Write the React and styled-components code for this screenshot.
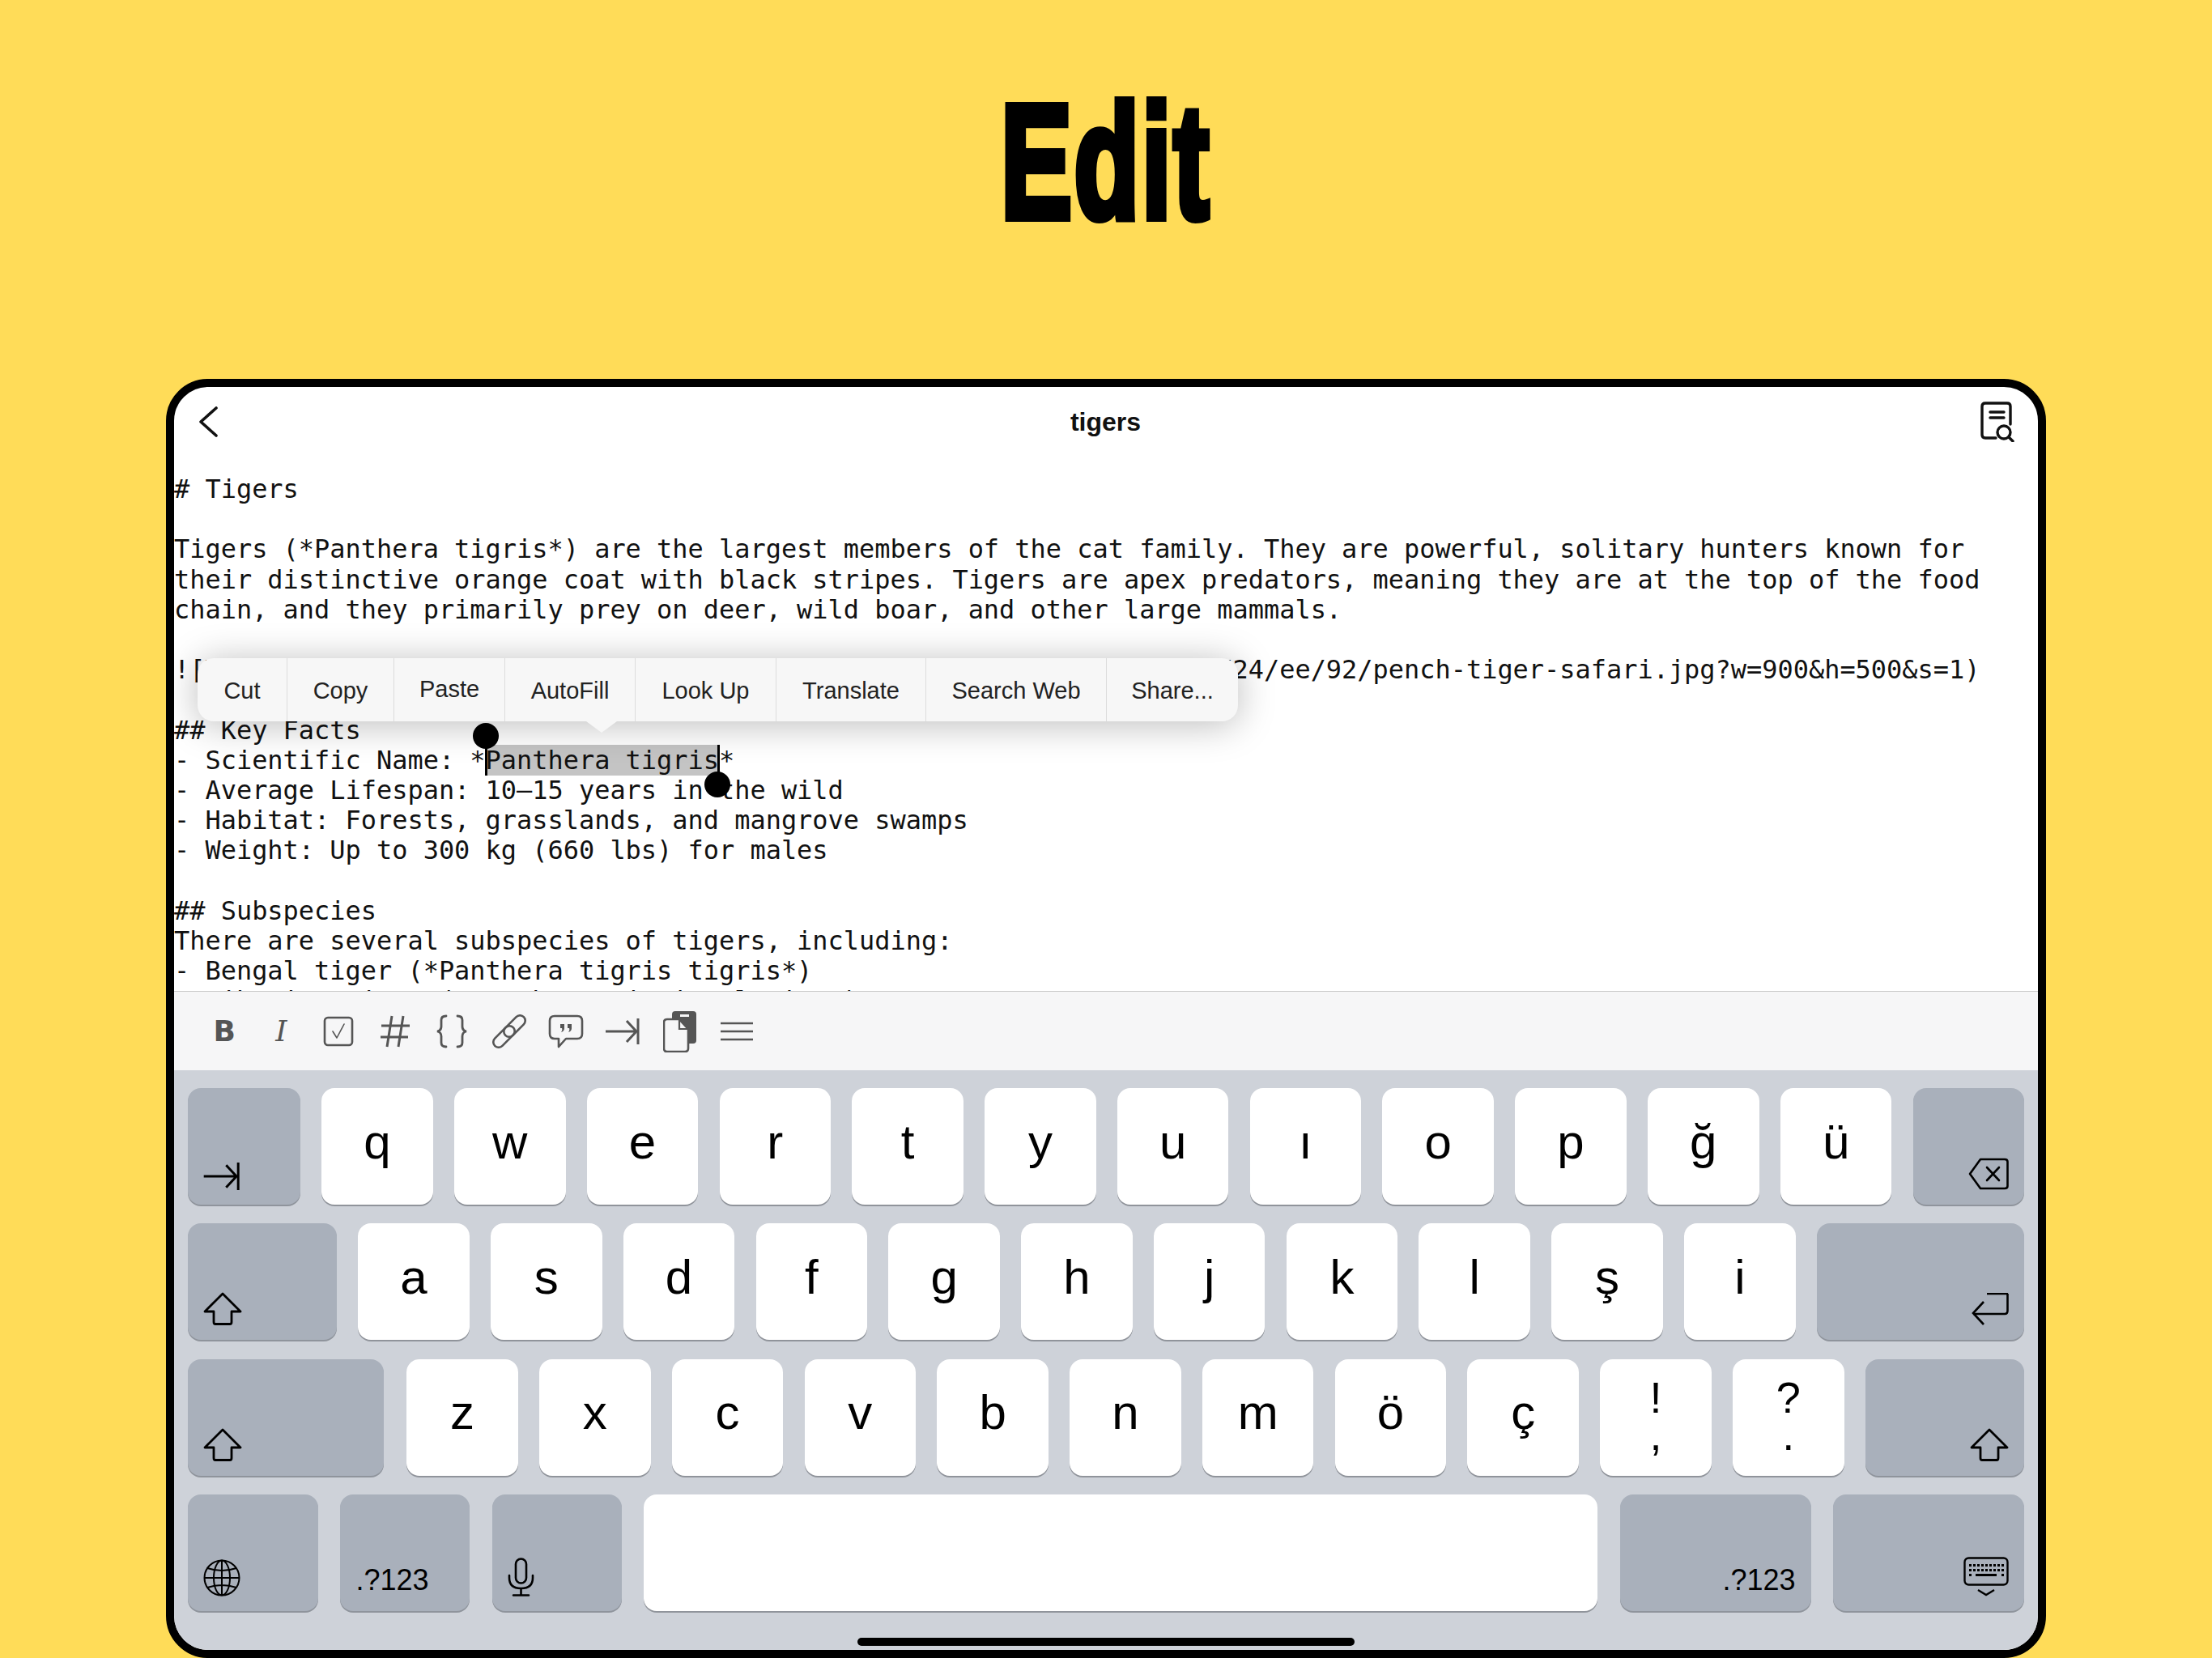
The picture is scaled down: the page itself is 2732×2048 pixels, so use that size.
import styled, { createGlobalStyle } from "styled-components";

const GlobalStyle = createGlobalStyle`
  html, body {
    margin: 0;
    padding: 0;
    background: #ffdc58;
  }
`;

const Page = styled.div`
  width: 2732px;
  height: 2048px;
  overflow: hidden;
  display: flex;
  flex-direction: column;
  align-items: center;
  background: #ffdc58;
`;

const Hero = styled.div`
  height: 468px;
  width: 100%;
  flex: none;
  display: flex;
  justify-content: center;
`;

const HeroTitle = styled.div`
  margin-top: 50px;
  height: 300px;
  line-height: 300px;
  font-family: "Liberation Sans", Arial, sans-serif;
  font-weight: 700;
  font-size: 200px;
  color: #000;
  -webkit-text-stroke: 10px #000;
  letter-spacing: 4px;
  transform: scaleX(0.66);
`;

const Device = styled.div`
  box-sizing: border-box;
  width: 2322px;
  height: 1580px;
  flex: none;
  border: 10px solid #000;
  border-radius: 52px;
  background: #fff;
  overflow: hidden;
  display: flex;
  flex-direction: column;
`;

const NavBar = styled.div`
  height: 86px;
  flex: none;
  display: grid;
  grid-template-columns: 1fr auto 1fr;
  align-items: center;
  padding: 0 29px 0 28px;
`;

const NavTitle = styled.div`
  font-family: "Liberation Sans", Arial, sans-serif;
  font-weight: 700;
  font-size: 32px;
  color: #111;
`;

const NavRight = styled.div`
  display: flex;
  justify-content: flex-end;
`;

const Editor = styled.div`
  position: relative;
  flex: 1;
  min-height: 0;
  overflow: hidden;
  padding-top: 22px;
  font-family: "DejaVu Sans Mono", "Liberation Mono", monospace;
  font-size: 31.95px;
  line-height: 37.2px;
  color: #111;
  white-space: pre;
`;

const Line = styled.div`
  height: 37.2px;
`;

const Selection = styled.span`
  position: relative;
  background: #c4c4c4;
`;

const Caret = styled.span`
  position: absolute;
  width: 3px;
  background: #000;
  left: ${(p) => (p.$end ? "calc(100% - 2px)" : "-1px")};
  top: ${(p) => (p.$end ? "0" : "-11px")};
  bottom: 0;
`;

const Knob = styled.span`
  position: absolute;
  width: 32px;
  height: 32px;
  border-radius: 50%;
  background: #000;
  left: ${(p) => (p.$end ? "calc(100% - 18px)" : "-16px")};
  top: ${(p) => (p.$end ? "33px" : "-27px")};
`;

const Menu = styled.div`
  position: absolute;
  left: 29px;
  top: 249px;
  height: 78px;
  display: flex;
  border-radius: 20px;
  background: #f7f7f7;
  box-shadow: 0 4px 46px rgba(0, 0, 0, 0.27);
`;

const MenuItem = styled.div`
  box-sizing: border-box;
  width: ${(p) => p.$w}px;
  display: flex;
  align-items: center;
  justify-content: center;
  padding-top: ${(p) => (p.$raised ? 0 : 3)}px;
  font-family: "Liberation Sans", Arial, sans-serif;
  font-size: 29px;
  color: #222;
  border-right: ${(p) => (p.$last ? "none" : "1px solid #dcdcdc")};
`;

const MenuArrow = styled.div`
  position: absolute;
  left: 480px;
  top: 78px;
  width: 0;
  height: 0;
  border-left: 19px solid transparent;
  border-right: 19px solid transparent;
  border-top: 14px solid #f7f7f7;
`;

const Toolbar = styled.div`
  box-sizing: border-box;
  height: 98px;
  flex: none;
  display: flex;
  align-items: center;
  padding-left: 27px;
  background: #f6f6f7;
  border-top: 1px solid #c9c9c9;
  color: #555;
`;

const ToolSlot = styled.div`
  width: 70.3px;
  height: 60px;
  display: flex;
  align-items: center;
  justify-content: center;
`;

const ToolBold = styled.span`
  font-family: "DejaVu Sans", sans-serif;
  font-weight: 700;
  font-size: 36px;
  line-height: 1;
`;

const ToolItalic = styled.span`
  font-family: "DejaVu Serif", serif;
  font-style: italic;
  font-size: 36px;
  line-height: 1;
`;

const Keyboard = styled.div`
  box-sizing: border-box;
  height: 716px;
  flex: none;
  display: flex;
  flex-direction: column;
  align-items: center;
  padding-top: 22px;
  background: #ced2d9;
`;

const KeyRows = styled.div`
  width: 2268px;
  display: flex;
  flex-direction: column;
  gap: 23.3px;
`;

const KeyRow = styled.div`
  display: flex;
  gap: ${(p) => p.$gap || 26.2}px;
`;

const Key = styled.div`
  box-sizing: border-box;
  width: ${(p) => p.$w || 137.6}px;
  height: 144px;
  flex: none;
  border-radius: 16px;
  background: ${(p) => (p.$dark ? "#a9b0bb" : "#fff")};
  box-shadow: 0 2px 0 ${(p) => (p.$dark ? "#8f949c" : "#90949b")};
  margin-right: ${(p) => p.$after || 0}px;
  font-family: "Liberation Sans", Arial, sans-serif;
  color: #000;
`;

const LetterKey = styled(Key)`
  display: flex;
  align-items: center;
  justify-content: center;
  padding-bottom: 12px;
  font-size: 60px;
`;

const PunctKey = styled(Key)`
  display: flex;
  flex-direction: column;
  align-items: center;
  padding-top: 17px;
  font-size: 54px;
  line-height: 60px;
`;

const PunctLower = styled.span`
  margin-top: -14px;
`;

const ActionKey = styled(Key)`
  display: flex;
  align-items: flex-end;
  justify-content: ${(p) => (p.$right ? "flex-end" : "flex-start")};
  padding: 0 19px 18px;
`;

const ActionText = styled.span`
  font-size: 36px;
  line-height: 36px;
  padding-bottom: 2px;
`;

const HomeBar = styled.div`
  width: 614px;
  height: 10px;
  margin-top: 33px;
  border-radius: 5px;
  background: #000;
`;

const BackIcon = () => (
  <svg width="28" height="40" viewBox="0 0 28 40" fill="none" stroke="#111" strokeWidth="3.6" strokeLinecap="round" strokeLinejoin="round">
    <path d="M24 3 L5 20 L24 37" />
  </svg>
);

const DocSearchIcon = () => (
  <svg width="42" height="50" viewBox="0 0 42 50" fill="none" stroke="#111" strokeWidth="3.4" strokeLinecap="round" strokeLinejoin="round">
    <path d="M19 45 H6 Q2 45 2 41 V6 Q2 2 6 2 H33 Q37 2 37 6 V28" />
    <path d="M12 13 H29 M12 20 H29" />
    <circle cx="29" cy="38" r="8" />
    <path d="M35 44 L40 49" />
  </svg>
);

const CheckIcon = () => (
  <svg width="38" height="38" viewBox="0 0 38 38" fill="none" stroke="currentColor" strokeLinecap="round" strokeLinejoin="round">
    <rect x="2" y="2" width="34" height="34" rx="4" strokeWidth="2.6" />
    <path d="M12 19 L17 27 L26 10" strokeWidth="1.6" />
  </svg>
);

const HashIcon = () => (
  <svg width="38" height="40" viewBox="0 0 38 40" fill="none" stroke="currentColor" strokeWidth="3">
    <path d="M15 1 L9 39 M29 1 L23 39 M2 13 H37 M1 27 H35" />
  </svg>
);

const BracesIcon = () => (
  <svg width="40" height="42" viewBox="0 0 40 42" fill="none" stroke="currentColor" strokeWidth="2.8" strokeLinecap="round">
    <path d="M13 2 Q7 2 7 7 V15 Q7 20 2 21 Q7 22 7 27 V35 Q7 40 13 40" />
    <path d="M27 2 Q33 2 33 7 V15 Q33 20 38 21 Q33 22 33 27 V35 Q33 40 27 40" />
  </svg>
);

const LinkIcon = () => (
  <svg width="42" height="42" viewBox="0 0 42 42" fill="none" stroke="currentColor" strokeWidth="2.6">
    <rect x="21" y="-1.500" width="13" height="32" rx="6.500" transform="rotate(45 27.500 14.500)" />
    <rect x="8" y="11.500" width="13" height="32" rx="6.500" transform="rotate(45 14.500 27.500)" />
  </svg>
);

const QuoteIcon = () => (
  <svg width="44" height="42" viewBox="0 0 44 42" fill="none" stroke="currentColor" strokeWidth="2.6" strokeLinejoin="round">
    <path d="M8 2 H36 Q42 2 42 8 V24 Q42 30 36 30 H22 L13 40 V30 H8 Q2 30 2 24 V8 Q2 2 8 2 Z" />
    <path d="M15 12 h5 v5 q0 4 -4 5 q2 -3 1 -5 h-2 Z M24 12 h5 v5 q0 4 -4 5 q2 -3 1 -5 h-2 Z" fill="currentColor" stroke="none" />
  </svg>
);

const TabIcon = ({ width = 42, height = 32, stroke = 3 }) => (
  <svg width={width} height={height} viewBox="0 0 42 32" fill="none" stroke="currentColor" strokeWidth={stroke}>
    <path d="M0 16 H38 M26 3 L38 16 L26 29" />
    <path d="M40 0 V32" />
  </svg>
);

const PasteIcon = () => (
  <svg width="42" height="52" viewBox="0 0 42 52" fill="none">
    <rect x="11" y="1" width="30" height="40" rx="4" fill="#555" />
    <rect x="21" y="5" width="11" height="3" fill="#f6f6f7" />
    <path d="M5 11 H20 L31 23 V47 Q31 51 27 51 H5 Q1 51 1 47 V15 Q1 11 5 11 Z" fill="#f6f6f7" stroke="#555" strokeWidth="2.6" />
    <path d="M20 11 V23 H31" stroke="#555" strokeWidth="2.2" />
  </svg>
);

const LinesIcon = () => (
  <svg width="40" height="24" viewBox="0 0 40 24" fill="none" stroke="currentColor" strokeWidth="2.6">
    <path d="M0 2 H40 M0 12 H40 M0 22 H40" />
  </svg>
);

const ShiftIcon = () => (
  <svg width="48" height="41" viewBox="0 0 48 41" fill="none" stroke="#000" strokeWidth="2.8" strokeLinejoin="round">
    <path d="M24 2 L46 24 H35 V37 Q35 39.500 33 39.500 H15 Q13 39.500 13 37 V24 H2 Z" />
  </svg>
);

const BackspaceIcon = () => (
  <svg width="50" height="40" viewBox="0 0 50 40" fill="none" stroke="#000" strokeWidth="2.6" strokeLinejoin="round" strokeLinecap="round">
    <path d="M15 2 H45 Q48.500 2 48.500 5 V35 Q48.500 38 45 38 H15 L2 20 Z" />
    <path d="M23 12 L38 28 M38 12 L23 28" />
  </svg>
);

const ReturnIcon = () => (
  <svg width="47" height="40" viewBox="0 0 47 40" fill="none" stroke="#000" strokeWidth="2.6">
    <path d="M45.500 1 V22 Q45.500 26 42 26 H3" />
    <path d="M16 11 L3 25 L16 39" />
    <path d="M20 1 H46" />
  </svg>
);

const GlobeIcon = () => (
  <svg width="46" height="46" viewBox="0 0 46 46" fill="none" stroke="#000" strokeWidth="2">
    <circle cx="23" cy="23" r="21.500" />
    <ellipse cx="23" cy="23" rx="10" ry="21.500" />
    <path d="M23 1 V45 M1.500 23 H44.500 M5 11 Q23 17 41 11 M5 35 Q23 29 41 35" />
  </svg>
);

const MicIcon = () => (
  <svg width="33" height="48" viewBox="0 0 33 48" fill="none" stroke="#000" strokeWidth="2.6" strokeLinecap="round">
    <rect x="10" y="1.500" width="13" height="30" rx="6.500" />
    <path d="M2 22 V25 Q2 38 16.500 38 Q31 38 31 25 V22 M16.500 38 V46 M7 46.500 H26" />
  </svg>
);

const KeyboardIcon = () => {
  const dots = [];
  [9, 15, 21].forEach((y, row) => {
    for (let i = 0; i < 9; i++) {
      if (row === 2 && i > 0 && i < 8) continue;
      dots.push(<rect key={`${row}-${i}`} x={7 + i * 5} y={y} width="3" height="3" fill="#000" stroke="none" />);
    }
  });
  return (
    <svg width="56" height="49" viewBox="0 0 56 49" fill="none" stroke="#000" strokeWidth="2.4">
      <rect x="1.500" y="1.500" width="53" height="33" rx="5" />
      {dots}
      <path d="M15 22.500 H41" strokeWidth="3" />
      <path d="M18 41 L28 47 L38 41" />
    </svg>
  );
};

const TEXT_TOP = ["# Tigers", "", "Tigers (*Panthera tigris*) are the largest members of the cat family. They are powerful, solitary hunters known for", "their distinctive orange coat with black stripes. Tigers are apex predators, meaning they are at the top of the food", "chain, and they primarily prey on deer, wild boar, and other large mammals.", "", "![Tiger](https://images.example.com/content/wildlife/photos/2019/11/24/ee/92/pench-tiger-safari.jpg?w=900&h=500&s=1)", "", "## Key Facts"];

const TEXT_BOTTOM = ["- Average Lifespan: 10–15 years in the wild", "- Habitat: Forests, grasslands, and mangrove swamps", "- Weight: Up to 300 kg (660 lbs) for males", "", "## Subspecies", "There are several subspecies of tigers, including:", "- Bengal tiger (*Panthera tigris tigris*)", "- Siberian tiger (*Panthera tigris altaica*)"];

const MENU_ITEMS = [
  ["Cut", 111],
  ["Copy", 132],
  ["Paste", 137, true],
  ["AutoFill", 161],
  ["Look Up", 174],
  ["Translate", 185],
  ["Search Web", 223],
  ["Share...", 162],
];

const TOOLS = [
  <ToolBold>B</ToolBold>,
  <ToolItalic>I</ToolItalic>,
  <CheckIcon />,
  <HashIcon />,
  <BracesIcon />,
  <LinkIcon />,
  <QuoteIcon />,
  <TabIcon />,
  <PasteIcon />,
  <LinesIcon />,
];

const Letters = ({ chars }) =>
  chars.split("").map((c) => <LetterKey key={c}>{c}</LetterKey>);

export default function App() {
  return (
    <Page>
      <GlobalStyle />
      <Hero>
        <HeroTitle>Edit</HeroTitle>
      </Hero>
      <Device>
        <NavBar>
          <BackIcon />
          <NavTitle>tigers</NavTitle>
          <NavRight>
            <DocSearchIcon />
          </NavRight>
        </NavBar>
        <Editor>
          {TEXT_TOP.map((line, i) => (
            <Line key={i}>{line}</Line>
          ))}
          <Line>
            - Scientific Name: *
            <Selection>
              Panthera tigris
              <Caret />
              <Knob />
              <Caret $end />
              <Knob $end />
            </Selection>
            *
          </Line>
          {TEXT_BOTTOM.map((line, i) => (
            <Line key={i}>{line}</Line>
          ))}
          <Menu>
            {MENU_ITEMS.map(([label, w, raised], i) => (
              <MenuItem key={label} $w={w} $raised={raised} $last={i === MENU_ITEMS.length - 1}>
                {label}
              </MenuItem>
            ))}
            <MenuArrow />
          </Menu>
        </Editor>
        <Toolbar>
          {TOOLS.map((tool, i) => (
            <ToolSlot key={i}>{tool}</ToolSlot>
          ))}
        </Toolbar>
        <Keyboard>
          <KeyRows>
            <KeyRow>
              <ActionKey $dark $w={139}>
                <TabIcon width={46} height={34} stroke={2.8} />
              </ActionKey>
              <Letters chars="qwertyuıopğü" />
              <ActionKey $dark $right>
                <BackspaceIcon />
              </ActionKey>
            </KeyRow>
            <KeyRow>
              <ActionKey $dark $w={184}>
                <ShiftIcon />
              </ActionKey>
              <Letters chars="asdfghjklşi" />
              <ActionKey $dark $right $w={256}>
                <ReturnIcon />
              </ActionKey>
            </KeyRow>
            <KeyRow>
              <ActionKey $dark $w={242} $after={2}>
                <ShiftIcon />
              </ActionKey>
              <Letters chars="zxcvbnmöç" />
              <PunctKey>
                <span>!</span>
                <PunctLower>,</PunctLower>
              </PunctKey>
              <PunctKey>
                <span>?</span>
                <PunctLower>.</PunctLower>
              </PunctKey>
              <ActionKey $dark $right $w={196}>
                <ShiftIcon />
              </ActionKey>
            </KeyRow>
            <KeyRow $gap={27.4}>
              <ActionKey $dark $w={161}>
                <GlobeIcon />
              </ActionKey>
              <ActionKey $dark $w={160}>
                <ActionText>.?123</ActionText>
              </ActionKey>
              <ActionKey $dark $w={160}>
                <MicIcon />
              </ActionKey>
              <Key $w={1178} />
              <ActionKey $dark $right $w={236}>
                <ActionText>.?123</ActionText>
              </ActionKey>
              <ActionKey $dark $right $w={236}>
                <KeyboardIcon />
              </ActionKey>
            </KeyRow>
          </KeyRows>
          <HomeBar />
        </Keyboard>
      </Device>
    </Page>
  );
}
